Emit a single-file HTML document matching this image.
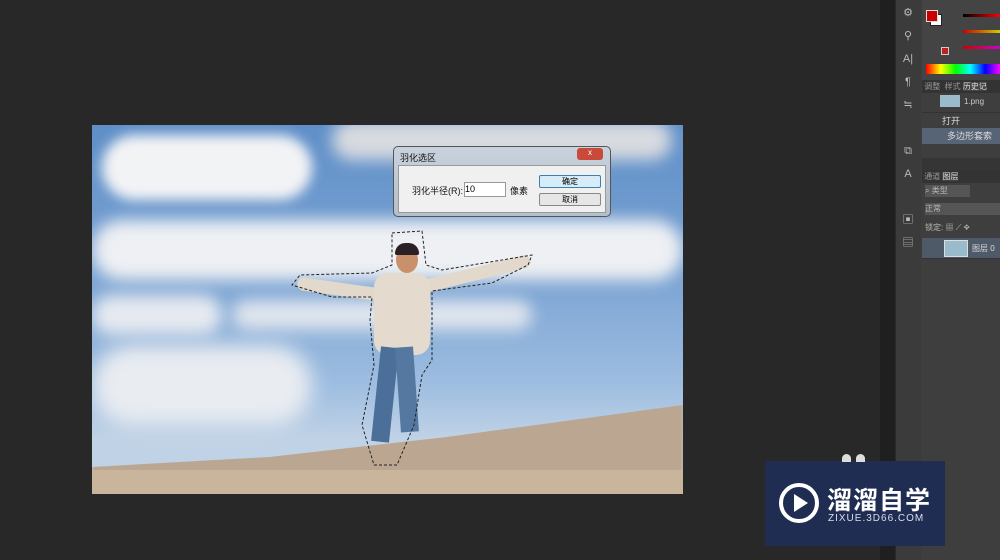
<!DOCTYPE html>
<html><head><meta charset="utf-8"><style>
body{margin:0;width:1000px;height:560px;background:#282828;position:relative;overflow:hidden;font-family:"Liberation Sans","Noto Sans CJK SC",sans-serif}
.a{position:absolute}
</style></head><body>
<div class="a" style="left:880px;top:0;width:15px;height:560px;background:#1f1f1f"></div>
<div class="a" style="left:895px;top:0;width:25px;height:560px;background:#3b3b3b;border-left:1px solid #2a2a2a"></div>
<div class="a" style="left:921px;top:0;width:79px;height:560px;background:#3e3e3e"></div>
<div class="a" style="left:900px;top:2px;color:#bbb;font-size:11px;line-height:23px;width:16px;text-align:center">⚙<br>⚲<br>A|<br>¶<br>≒<br><br>⧉<br>A<br><br>▣<br>▤</div>
<div class="a" style="left:922px;top:0;width:78px;height:80px;background:#444"></div>
<div class="a" style="left:930px;top:14px;width:10px;height:10px;background:#fff;border:1px solid #222"></div>
<div class="a" style="left:926px;top:10px;width:10px;height:10px;background:#c00;border:1px solid #ddd"></div>
<div class="a" style="left:963px;top:14px;width:37px;height:3px;background:linear-gradient(90deg,#000,#f00)"></div>
<div class="a" style="left:963px;top:30px;width:37px;height:3px;background:linear-gradient(90deg,#c00,#cc0)"></div>
<div class="a" style="left:963px;top:46px;width:37px;height:3px;background:linear-gradient(90deg,#c00,#c0c)"></div>
<div class="a" style="left:941px;top:47px;width:6px;height:6px;background:#b22;border:1px solid #ccc"></div>
<div class="a" style="left:926px;top:64px;width:74px;height:10px;background:linear-gradient(90deg,#f00,#ff0,#0f0,#0ff,#00f,#f0f)"></div>
<div class="a" style="left:922px;top:80px;width:78px;height:13px;background:#333;color:#999;font-size:8px;line-height:13px">&nbsp;调整 &nbsp;样式 <span style="color:#ddd;background:#444">历史记</span></div>
<div class="a" style="left:922px;top:93px;width:78px;height:17px;color:#ccc;font-size:8px"><span class="a" style="left:18px;top:2px;width:20px;height:12px;background:#9bc"></span><span class="a" style="left:42px;top:4px">1.png</span></div>
<div class="a" style="left:922px;top:112px;width:78px;height:16px;color:#ddd;font-size:9px;line-height:16px;border-top:1px solid #333">&nbsp;&nbsp;&nbsp;&nbsp;&nbsp;&nbsp;&nbsp;&nbsp;打开</div>
<div class="a" style="left:922px;top:128px;width:78px;height:16px;background:#566476;color:#ddd;font-size:9px;line-height:16px">&nbsp;&nbsp;&nbsp;&nbsp;&nbsp;&nbsp;&nbsp;&nbsp;&nbsp;&nbsp;多边形套索</div>
<div class="a" style="left:922px;top:158px;width:78px;height:12px;background:#353535"></div>
<div class="a" style="left:922px;top:170px;width:78px;height:13px;background:#333;color:#999;font-size:8px;line-height:13px">&nbsp;通道 <span style="color:#ddd;background:#444">图层</span></div>
<div class="a" style="left:925px;top:185px;width:45px;height:12px;background:#555;color:#bbb;font-size:8px">⌕ 类型</div>
<div class="a" style="left:925px;top:203px;width:75px;height:12px;background:#555;color:#bbb;font-size:8px">正常</div>
<div class="a" style="left:925px;top:222px;color:#bbb;font-size:8px">锁定: ▦ ⟋ ✥</div>
<div class="a" style="left:922px;top:238px;width:78px;height:20px;background:#4f5a69"></div>
<div class="a" style="left:944px;top:240px;width:22px;height:15px;background:#9bc;border:1px solid #ddd"></div>
<div class="a" style="left:972px;top:243px;color:#ddd;font-size:8px">图层 0</div>
<div class="a" style="left:922px;top:258px;width:78px;height:1px;background:#333"></div>
<div class="a" style="left:92px;top:125px;width:591px;height:369px;background:linear-gradient(180deg,#5f8fc8 0%,#7aa3d3 40%,#9dbde0 70%,#c0d2e6 85%);overflow:hidden">
 <div class="a" style="left:10px;top:10px;width:210px;height:65px;background:#f2f3f5;border-radius:40px;filter:blur(6px)"></div>
 <div class="a" style="left:240px;top:-5px;width:340px;height:40px;background:#d8dbe0;border-radius:30px;filter:blur(8px)"></div>
 <div class="a" style="left:0;top:95px;width:591px;height:60px;background:#eef0f3;border-radius:40px;filter:blur(8px)"></div>
 <div class="a" style="left:0;top:170px;width:130px;height:40px;background:#e6eaf0;border-radius:30px;filter:blur(8px)"></div>
 <div class="a" style="left:140px;top:175px;width:300px;height:30px;background:#dfe5ed;border-radius:20px;filter:blur(8px)"></div>
 <div class="a" style="left:0;top:220px;width:220px;height:80px;background:#e9ecf1;border-radius:40px;filter:blur(10px)"></div>
 <div class="a" style="left:0;top:270px;width:591px;height:100px;background:#bba791;clip-path:polygon(0 72%,30% 62%,60% 42%,100% 10%,100% 100%,0 100%);filter:blur(1px)"></div>
 <div class="a" style="left:0;top:345px;width:591px;height:25px;background:#c9b49c"></div>
 <div class="a" style="left:205px;top:158px;width:90px;height:13px;background:#e2d8cb;border-radius:7px;transform:rotate(8deg)"></div>
 <div class="a" style="left:330px;top:142px;width:110px;height:13px;background:#e2d8cb;border-radius:7px;transform:rotate(-14deg)"></div>
 <div class="a" style="left:282px;top:148px;width:56px;height:82px;background:#e4dacd;border-radius:14px"></div>
 <div class="a" style="left:304px;top:122px;width:22px;height:26px;background:#c9906b;border-radius:50%"></div>
 <div class="a" style="left:303px;top:118px;width:24px;height:12px;background:#2a2025;border-radius:12px 12px 2px 2px"></div>
 <div class="a" style="left:284px;top:222px;width:18px;height:95px;background:#4b6f99;transform:rotate(6deg)"></div>
 <div class="a" style="left:306px;top:222px;width:18px;height:85px;background:#54789f;transform:rotate(-4deg)"></div>
 <svg class="a" style="left:0;top:0" width="591" height="369"><path d="M300 108 L330 106 L334 140 L350 145 L440 130 L436 140 L400 158 L340 166 L340 235 L330 250 L322 300 L305 340 L282 340 L270 300 L282 240 L278 195 L280 172 L240 172 L200 160 L208 150 L280 148 L300 140 Z" fill="none" stroke="#222" stroke-width="1" stroke-dasharray="3 2"/></svg>
</div>
<div class="a" style="left:393px;top:146px;width:216px;height:69px;background:linear-gradient(180deg,#c9d2dc,#b3bfcc);border:1px solid #555;border-radius:5px">
 <div class="a" style="left:6px;top:4px;font-size:9px;color:#111">羽化选区</div>
 <div class="a" style="left:183px;top:1px;width:26px;height:12px;background:#c94a3a;border-radius:3px;color:#fff;font-size:8px;text-align:center">x</div>
 <div class="a" style="left:4px;top:18px;width:206px;height:46px;background:#f0f0f0;border:1px solid #999"></div>
 <div class="a" style="left:18px;top:37px;font-size:9px;color:#111">羽化半径(R):</div>
 <div class="a" style="left:70px;top:35px;width:40px;height:13px;background:#fff;border:1px solid #999;font-size:9px;line-height:13px">10</div>
 <div class="a" style="left:116px;top:37px;font-size:9px;color:#111">像素</div>
 <div class="a" style="left:145px;top:28px;width:60px;height:11px;background:#d6ecf8;border:1px solid #3c7fb1;border-radius:2px;font-size:8px;text-align:center;line-height:11px">确定</div>
 <div class="a" style="left:145px;top:46px;width:60px;height:11px;background:#e6e6e6;border:1px solid #888;border-radius:2px;font-size:8px;text-align:center;line-height:11px">取消</div>
</div>
<div class="a" style="left:765px;top:461px;width:180px;height:85px;background:#1f2d52">
 <svg class="a" style="left:12px;top:20px" width="44" height="44" viewBox="0 0 44 44"><circle cx="22" cy="22" r="18" fill="none" stroke="#fff" stroke-width="4"/><path d="M17 13 L31 22 L17 31 Z" fill="#fff"/></svg>
 <div class="a" style="left:62px;top:20px;color:#fff;font-size:25px;font-weight:bold;letter-spacing:1px">溜溜自学</div>
 <div class="a" style="left:63px;top:52px;color:#dde;font-size:10px;letter-spacing:1px">ZIXUE.3D66.COM</div>
</div>
<div class="a" style="left:842px;top:454px;width:9px;height:8px;background:#ddd;border-radius:5px 5px 0 0"></div>
<div class="a" style="left:856px;top:454px;width:9px;height:8px;background:#ddd;border-radius:5px 5px 0 0"></div>
</body></html>
